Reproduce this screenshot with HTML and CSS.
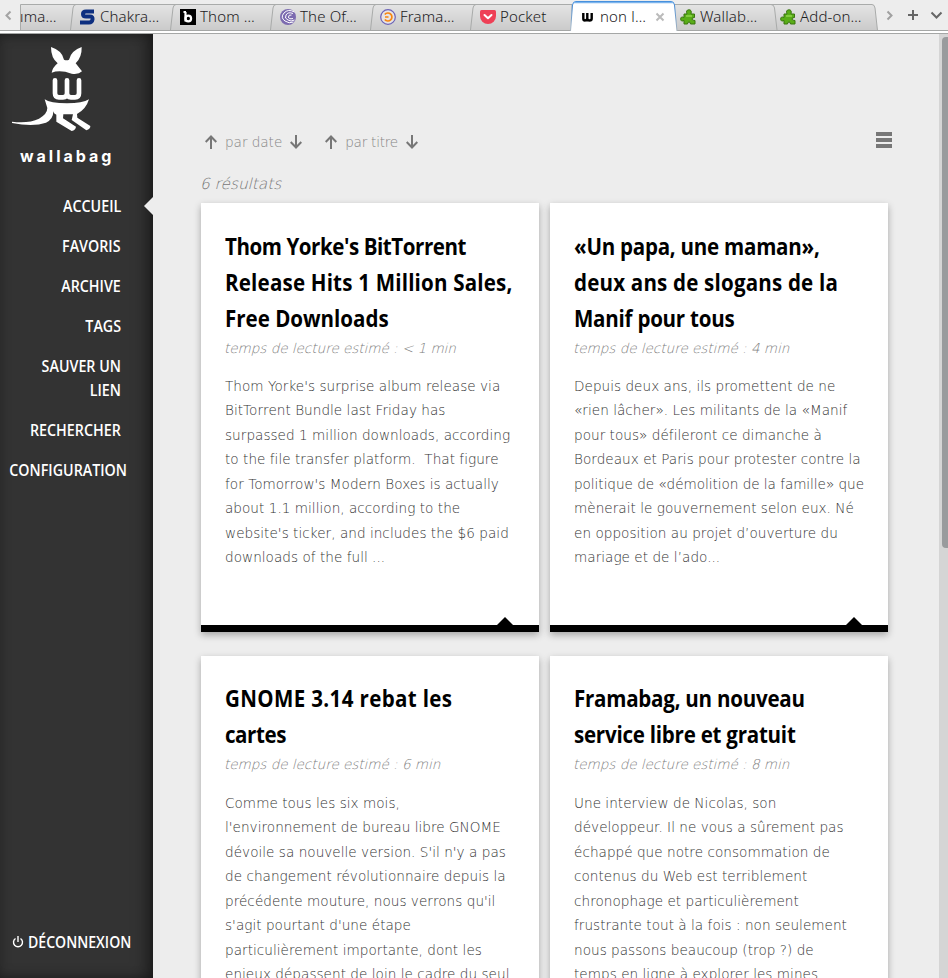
FILE: index.html
```
<!DOCTYPE html>
<html lang="fr">
<head>
<meta charset="utf-8">
<title>wallabag</title>
<link rel="stylesheet" href="styles.css">
</head>
<body>
<header class="tabbar">
  <svg class="tabshapes" width="948" height="34" viewBox="0 0 948 34">
    <defs>
      <linearGradient id="tg" x1="0" y1="0" x2="0" y2="1"><stop offset="0" stop-color="#e4e4e4"/><stop offset="1" stop-color="#cacaca"/></linearGradient>
      <linearGradient id="ag" x1="0" y1="0" x2="0" y2="1"><stop offset="0" stop-color="#3584d8"/><stop offset="1" stop-color="#a9b4bd"/></linearGradient>
    </defs>
    <path d="M0 31h948v2H0z" fill="#fff"/>
    <g fill="url(#tg)" stroke="#a9abaa">
      <path d="M20.500 30.500V4.500H572V30.500Z"/>
      <path d="M674 30.500V4.500H872Q874.500 4.500 875 8L877.500 30.500Z"/>
    </g>
    <g fill="none" stroke="#a9abaa">
      <path d="M70.500 30L73 8Q73.500 4.500 76 4.500M170.500 30L173 8Q173.500 4.500 176 4.500M270.500 30L273 8Q273.500 4.500 276 4.500M370.500 30L373 8Q373.500 4.500 376 4.500M470.500 30L473 8Q473.500 4.500 476 4.500M771 4.500Q774 4.500 774.500 8L777 30"/>
    </g>
    <path d="M0 30.500H948M0 33.500H948" stroke="#a5a7a6"/>
    <path d="M570 31L572.500 5Q573 1.500 576 1.500H671Q674 1.500 674.500 5L677 31Z" fill="#fff"/>
    <path d="M570.500 31L572.500 5Q573 1.500 576 1.500H671Q674 1.500 674.500 5L677 31" fill="none" stroke="url(#ag)"/>
    <path d="M574 2.500H673" stroke="#7cb4ec" stroke-width="1.500"/>
  </svg>
  <div class="tabs">
    <svg class="prev" width="20" height="34"><path d="M10.500 11.500L6.500 15.500L10.500 19.500" fill="none" stroke="#a3a3a3" stroke-width="2"/></svg>
    <div class="tab first"><span>ıma…</span></div>
    <div class="tab"><svg width="16" height="16"><path d="M14 2.500H6Q3 2.500 3 5T6 7.500H10Q13 7.500 12.500 10.500T9 13.500H0" fill="none" stroke="#0d2f80" stroke-width="4"/></svg><span>Chakra…</span></div>
    <div class="tab"><svg width="16" height="16"><path d="M0 0h16v16H0z"/><path d="M5.500 3V12.500M3.500 3H6" stroke="#fff" stroke-width="2.200"/><circle cx="8.300" cy="9.500" r="2.800" fill="none" stroke="#fff" stroke-width="2.200"/></svg><span>Thom …</span></div>
    <div class="tab"><svg width="16" height="16"><circle cx="8" cy="8" r="8" fill="#7c6bb0"/><g fill="none" stroke="#fff" stroke-width="1"><path d="M14.500 3Q8-.5 4 4T5 12Q9 15 13.500 13"/><path d="M13 4.500Q8 2.500 6 6T8 11Q11 13 14.500 11"/><path d="M11.500 6Q8.500 5.500 8.500 8T13 9.500"/></g></svg><span>The Of…</span></div>
    <div class="tab"><svg width="16" height="16"><circle cx="8" cy="8" r="7.300" fill="#e8e4e4" stroke="#6b62b8" stroke-width="1.200"/><path d="M4.800 5.500A4 4 0 1 1 4.800 10.500M5 8H8.500" fill="none" stroke="#f8860e" stroke-width="1.700"/></svg><span>Frama…</span></div>
    <div class="tab"><svg width="16" height="16"><path d="M1.500 1H14.500Q16 1 16 2.500V7A8 8 0 0 1 0 7V2.500Q0 1 1.500 1Z" fill="#ee4056"/><path d="M4.500 6L8 9.300L11.500 6" fill="none" stroke="#fff" stroke-width="2" stroke-linecap="round" stroke-linejoin="round"/></svg><span>Pocket</span></div>
    <div class="tab active"><svg width="16" height="16"><path d="M3.300 4V9.500Q3.300 11.500 5 11.500T7.300 9.500V4M7.300 9.500Q7.300 11.500 9.500 11.500T11.700 9.500V4" fill="none" stroke="#000" stroke-width="2.400"/></svg><span>non l…</span><svg class="close" width="10" height="10"><path d="M1.500 1.500L8.500 8.500M8.500 1.500L1.500 8.500" stroke="#bbb" stroke-width="2"/></svg></div>
    <div class="tab"><svg width="16" height="16"><path d="M4 5H7Q5.500 1 8.800.8T11 5H14.500V8.500Q12 8.500 12 10T15 11.500V15H10.500Q10.500 13 9 13T7.500 15H4V11.500Q.7 13 .7 10T4 8.500Z" fill="#59ad17" stroke="#39750f"/><path d="M6 7H12" stroke="#8fd64d" stroke-width="1.500"/></svg><span>Wallab…</span></div>
    <div class="tab"><svg width="16" height="16"><path d="M4 5H7Q5.500 1 8.800.8T11 5H14.500V8.500Q12 8.500 12 10T15 11.500V15H10.500Q10.500 13 9 13T7.500 15H4V11.500Q.7 13 .7 10T4 8.500Z" fill="#59ad17" stroke="#39750f"/><path d="M6 7H12" stroke="#8fd64d" stroke-width="1.500"/></svg><span>Add-on…</span></div>
    <svg class="tools" width="77" height="34" fill="none" stroke="#666" stroke-width="2"><path d="M16.500 11.500L20.500 15.500L16.500 19.500" stroke="#a0a0a0"/><path d="M42 10V20M37 15H47"/><path d="M60.500 12.500L65.500 17.500L70.500 12.500"/></svg>
  </div>
</header>
<div class="page">
  <aside class="sidebar">
    <div class="logo">
      <svg width="153" height="104" viewBox="0 -18 459 312" fill="#fff">
        <path d="M153 21Q187 32 192 59Q200 63 207 59Q213 32 245 21Q246 52 227 70L246 94Q236 104 215 101Q180 88 155 98Q158 82 173 70Q153 54 153 21Z"/>
        <path d="M165 121V160Q165 172 177 172H189Q201 172 201 160V121M201 160Q201 172 213 172H225Q237 172 237 160V121" fill="none" stroke="#fff" stroke-width="14" stroke-linecap="round"/>
        <path d="M134 178Q150 190 201 190Q248 190 267 178Q258 208 231 222L232 233L271 258Q272 266 259 271L215 240L219 223H190L189 235L228 260Q227 270 215 273L169 245V224Q160 221 160 214Q160 238 138 248Q100 262 36 249V245Q86 251 117 236Q142 222 142 204Z"/>
      </svg>
      <div class="wordmark">wallabag</div>
    </div>
    <nav class="menu">
      <a class="current"><span>ACCUEIL</span></a>
      <a><span>FAVORIS</span></a>
      <a><span>ARCHIVE</span></a>
      <a><span>TAGS</span></a>
      <a><span>SAUVER UN<br>LIEN</span></a>
      <a><span>RECHERCHER</span></a>
      <a class="wide"><span>CONFIGURATION</span></a>
    </nav>
    <a class="logout"><svg width="12" height="12" fill="none" stroke="#fff" stroke-width="1.400"><path d="M3.500 2.500A4.500 4.500 0 1 0 8.500 2.500M6 0V6"/></svg><span>DÉCONNEXION</span></a>
  </aside>
  <main class="content">
    <div class="sort">
      <svg class="arrow" viewBox="0 0 12 14"><path d="M6 14V1.500M.7 7L6 1.500L11.300 7"/></svg><span class="bydate">par date</span><svg class="arrow" viewBox="0 0 12 14"><path d="M6 0V12.500M.7 7L6 12.500L11.300 7"/></svg>
      <svg class="arrow second" viewBox="0 0 12 14"><path d="M6 14V1.500M.7 7L6 1.500L11.300 7"/></svg><span class="bytitle">par titre</span><svg class="arrow" viewBox="0 0 12 14"><path d="M6 0V12.500M.7 7L6 12.500L11.300 7"/></svg>
      <div class="burger"><i></i><i></i><i></i></div>
    </div>
    <div class="results">6 résultats</div>
    <div class="grid">
      <article class="card">
        <h2><span class="tight">Thom Yorke's BitTorrent</span><br><span class="loose">Release Hits 1 Million Sales,</span><br>Free Downloads</h2>
        <div class="time">temps de lecture estimé : &lt; 1 min</div>
        <p>Thom Yorke's surprise album release via<br>BitTorrent Bundle last Friday has<br>surpassed 1 million downloads, according<br>to the file transfer platform.&nbsp; That figure<br>for Tomorrow's Modern Boxes is actually<br>about 1.1 million, according to the<br>website's ticker, and includes the $6 paid<br>downloads of the full ...</p>
        <div class="foot"></div>
      </article>
      <article class="card">
        <h2><span class="snug">«Un papa, une maman»,</span><br><span class="loose">deux ans de slogans de la</span><br><span class="snug">Manif pour tous</span></h2>
        <div class="time">temps de lecture estimé : 4 min</div>
        <p>Depuis deux ans, ils promettent de ne<br>«rien lâcher». Les militants de la «Manif<br>pour tous» défileront ce dimanche à<br>Bordeaux et Paris pour protester contre la<br><span class="close-set">politique de «démolition de la famille» que</span><br>mènerait le gouvernement selon eux. Né<br>en opposition au projet d’ouverture du<br>mariage et de l’ado...</p>
        <div class="foot"></div>
      </article>
      <article class="card">
        <h2><span class="wider">GNOME 3.14 rebat les</span><br><span class="tight">cartes</span></h2>
        <div class="time">temps de lecture estimé : 6 min</div>
        <p>Comme tous les six mois,<br>l'environnement de bureau libre GNOME<br>dévoile sa nouvelle version. S'il n'y a pas<br>de changement révolutionnaire depuis la<br>précédente mouture, nous verrons qu'il<br>s'agit pourtant d'une étape<br>particulièrement importante, dont les<br>enjeux dépassent de loin le cadre du seul</p>
      </article>
      <article class="card">
        <h2><span class="snug">Framabag, un nouveau</span><br><span class="snug">service libre et gratuit</span></h2>
        <div class="time">temps de lecture estimé : 8 min</div>
        <p>Une interview de Nicolas, son<br>développeur. Il ne vous a sûrement pas<br>échappé que notre consommation de<br>contenus du Web est terriblement<br>chronophage et particulièrement<br>frustrante tout à la fois : non seulement<br>nous passons beaucoup (trop ?) de<br>temps en ligne à explorer les mines</p>
      </article>
    </div>
  </main>
  <div class="scrollbar"><div class="thumb"></div></div>
</div>
</body>
</html>
```
FILE: styles.css
```
* { box-sizing: border-box; }
body { margin: 0; height: 978px; overflow: hidden; background: #ededed; font-family: "DejaVu Sans Light", "DejaVu Sans", sans-serif; }
svg { display: block; flex: none; }

.tabbar { position: relative; height: 34px; }
.tabshapes { position: absolute; left: 0; top: 0; }
.tabs { position: relative; display: flex; height: 34px; }
.tab { width: 100px; flex: none; display: flex; align-items: center; gap: 4px; height: 34px; padding-left: 9px; font: 350 15px/32px "Noto Sans", sans-serif; letter-spacing: .15px; color: #1c2022; white-space: nowrap; }
.tab span { height: 34px; }
.tab.first { width: 51px; padding-left: 0; }
.close { margin-left: 5px; }

.page { display: flex; height: 944px; }
.sidebar { width: 153px; flex: none; display: flex; flex-direction: column; background: #333; box-shadow: inset -9px 0 16px -3px rgba(0,0,0,.4), inset 0 0 12px rgba(0,0,0,.25); font: 600 16px/24px "Open Sans", sans-serif; color: #fff; }
.logo { height: 160px; }
.wordmark { margin: 7px 0 0 20px; font: 700 16px/22px Inter, sans-serif; letter-spacing: 3px; }
.menu { display: flex; flex-direction: column; gap: 16px; }
.menu a { position: relative; display: flex; justify-content: flex-end; padding-right: 32px; text-align: right; }
.menu span { transform: scaleX(.892); transform-origin: right; white-space: nowrap; }
.menu a.wide { padding-right: 26px; }
.current::after { content: ""; position: absolute; right: 0; top: 3px; border: 9px solid transparent; border-left: 0; border-right-color: #ededed; }
.logout { display: flex; align-items: center; gap: 4px; margin-top: auto; padding: 0 0 24px 12px; }
.logout span { transform: scaleX(.88); transform-origin: left; }

.content { width: 786px; padding: 97px 50px 0 48px; overflow: hidden; }
.sort { display: flex; align-items: center; height: 24px; padding: 0 0 2px 4px; font-size: 13.6px; color: #858585; }
.arrow { width: 12px; height: 14px; fill: none; stroke: #777; stroke-width: 2; }
.bydate, .bytitle { margin: 0 8px; height: 20px; line-height: 20px; white-space: nowrap; letter-spacing: -.04px; }
.bytitle { letter-spacing: -.25px; }
.second { margin-left: 23px; }
.burger { display: flex; flex-direction: column; gap: 2px; margin: -4px -3px 0 auto; }
.burger i { width: 16px; height: 4px; background: #777; }
.results { height: 24px; margin: 17px 0 0 -1px; line-height: 24px; font-size: 15.3px; font-style: italic; color: #777; }
.grid { display: grid; grid-template-columns: 338px 338px; grid-auto-rows: 429px; gap: 24px 11px; margin-top: 7px; }
.card { display: flex; flex-direction: column; padding: 25px 0 0 24px; background: #fff; box-shadow: 0 3px 7px rgba(0,0,0,.3); white-space: nowrap; }
.card:nth-child(n+3) { padding-top: 24px; }
.card:nth-child(n+3) .time { margin-bottom: 15px; }
.card h2 { margin: 0; font: 700 24px/36px "Open Sans", sans-serif; transform: scaleX(.855); transform-origin: left; color: #000; }
.tight { letter-spacing: -.5px; }
.snug { letter-spacing: -.27px; }
.loose { letter-spacing: .24px; }
.wider { letter-spacing: .43px; }
.close-set { letter-spacing: -.04px; }
.time { margin: 0 0 14px -1px; line-height: 24px; font-size: 13.6px; font-style: italic; letter-spacing: -.05px; color: #808080; }
.card p { margin: 0; font-size: 13.6px; line-height: 24.480px; letter-spacing: .03px; color: #333; }
.foot { position: relative; height: 7px; margin: auto 0 0 -24px; background: #000; }
.foot::before { content: ""; position: absolute; right: 26px; top: -8px; border: 8px solid transparent; border-top: 0; border-bottom-color: #000; }

.scrollbar { width: 9px; padding: 3px 0 0 3px; background: #d5d5d5; }
.thumb { height: 511px; border-radius: 4px 0 0 4px; background: #999b9d; }
```
